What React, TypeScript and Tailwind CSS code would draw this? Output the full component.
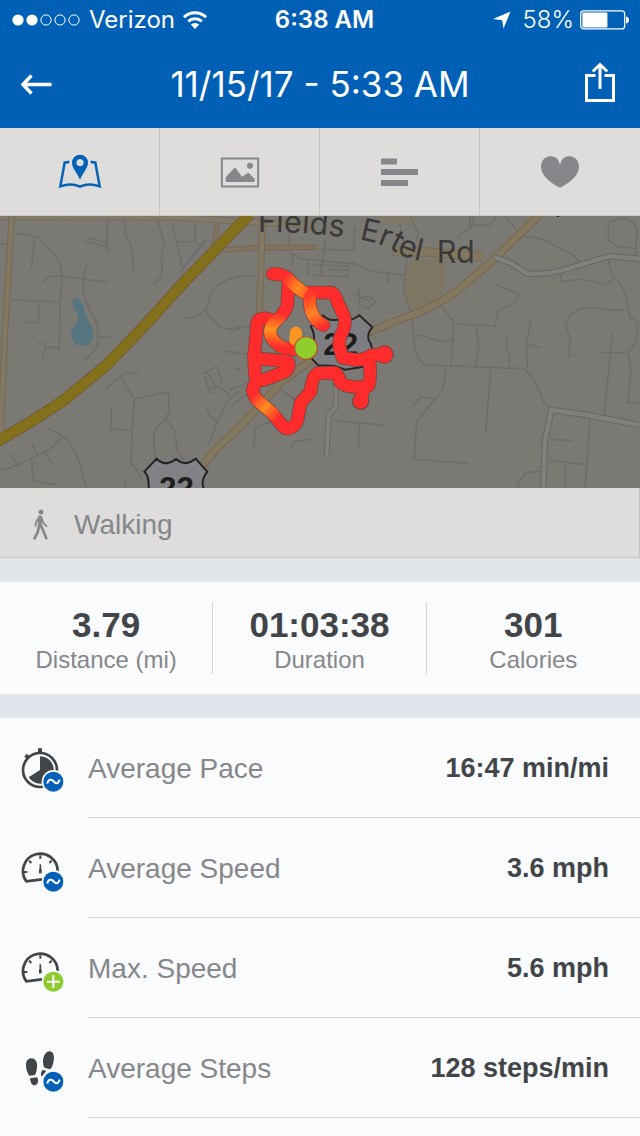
import React from "react";

const WEST_STREETS = [
  "M45 70 Q90 72 120 85 L175 150 Q186 170 186 210 L180 280 L178 422",
  "M105 82 L93 175",
  "M0 102 L20 102",
  "M22 268 L180 276",
  "M118 276 L114 336 L75 337",
  "M112 400 L130 402 L137 412 L178 412 M137 412 L127 442",
  "M130 215 Q145 195 175 198 L250 207 L322 217",
  "M265 158 Q250 180 250 210 L250 250 Q260 285 290 340 Q296 370 291 410 Q280 430 250 453",
  "M295 381 L333 383",
  "M322 30 L322 128 M262 82 L318 97 M256 94 L318 110",
  "M375 30 L376 75 Q395 100 398 130 L402 192",
  "M475 35 L493 105 Q480 125 487 190 Q480 210 461 223",
  "M515 38 L547 170 M532 95 L585 95 L600 105 M585 40 L585 95",
  "M720 198 Q650 215 635 250 L615 300 Q590 325 552 325",
  "M615 300 Q640 335 670 357 Q700 360 720 350",
  "M675 425 L720 428 M705 475 L720 478",
  "M605 493 L650 470 L667 520 M622 485 L645 530 M615 500 L628 545 L640 550 M628 540 L655 527 L688 555",
  "M720 545 Q690 560 680 580 L650 640 L625 705 M620 595 Q630 625 650 632",
  "M316 537 L378 488 L418 491 M362 500 L403 568 L505 545 L507 605 L497 628 Q470 650 463 665 Q460 710 466 745",
  "M497 628 L523 660 Q530 710 533 725 L555 755",
  "M403 568 L397 660 L393 755 L425 805 M334 595 L333 657 L395 660",
  "M145 657 L188 677 Q215 700 240 760 Q248 800 260 833",
  "M188 677 Q165 710 140 722 L60 762 L20 778 L0 778 M95 698 L112 733 M30 730 L52 763 M130 722 L158 762",
  "M95 745 L98 808 L125 818 L168 824 M376 812 L374 833",
];

const CENTER_STREETS = [
  "M110 118 L180 120 L205 145 L290 155 L370 160 L430 185 L525 195",
  "M178 30 L174 122 M286 90 L272 195 M270 118 L370 120 L375 50",
  "M188 128 L188 165 M232 150 L234 195 M240 165 L355 168 L352 200 L248 196 M295 178 L352 180 M476 192 L472 220",
  "M370 250 L420 275 M386 235 L390 295 M390 265 L418 258 L440 276 L412 295 L400 285",
  "M0 205 Q30 195 75 198 M0 370 Q30 350 60 348 M20 430 L60 432 M0 540 L60 515 M0 590 L60 545",
  "M180 560 L198 570 M310 632 L460 645 M388 642 L385 720",
  "M70 720 L75 655 Q100 640 130 635 M180 720 L190 695 L242 688 M150 540 L190 565",
];

const EAST_STREETS = [
  "M172 85 Q175 70 210 55 L210 20 M218 45 L265 47 L290 20 M210 50 L220 45 L218 20",
  "M315 20 L350 60 L375 80 Q430 80 470 110 L520 135 L540 158",
  "M625 38 Q650 25 680 25 Q710 35 712 70 L705 115 L650 110 L625 90 L625 38 M708 90 L708 138",
  "M480 192 L485 215 L545 207 L610 223 L645 205 M625 150 L635 190 Q665 225 675 250 L690 320 L715 340 Q710 410 685 427 L692 480 L684 577 L715 580",
  "M282 223 L358 252 Q350 280 335 285 L295 300 L285 348 L165 342 M120 282 L160 335 L160 380 L152 468",
  "M680 298 Q660 305 600 296 L560 292 Q515 300 500 335 L498 350 L510 385 L508 430 L502 455 M508 435 L535 438",
  "M605 428 L685 427 M637 370 L613 615",
  "M0 42 L20 150 L10 240 L35 320 L42 380 Q45 460 80 465 L375 476 L408 520 L432 580 L450 595",
  "M42 380 Q75 370 95 388 Q130 398 160 390 M228 348 L236 405 L228 470 M320 385 L320 420 Q332 435 328 470 M392 330 L380 400 L382 474 M385 403 L418 413",
  "M137 473 Q135 530 120 550 L50 635 L42 748 L203 760 M38 588 L63 560 L100 567 M272 477 L257 672",
  "M450 688 L515 692 M570 628 L556 833 M447 752 L560 764 M497 764 L495 833 M350 833 L375 788 L425 785",
  "M30 20 L55 70 L48 95 M0 195 L15 195",
];

const ROUTE = [
  "M128 192 Q158 192 172 204 Q195 230 220 247 L305 248 Q318 255 322 275 L343 320 Q348 345 338 365 Q325 385 328 410 L338 443 L380 450 Q400 450 425 436 L468 433",
  "M240 250 Q236 295 250 317 Q262 338 280 345",
  "M175 225 L172 285 Q165 310 135 335 Q115 355 122 378 Q135 402 158 412 L190 419",
  "M132 336 Q110 320 93 327 Q78 330 80 360 L72 440 L75 495 Q80 512 100 510 L160 487 Q178 480 176 460 Q172 450 150 452 L90 446",
  "M80 508 L68 540 Q70 560 90 578 L125 607 L160 650 Q173 662 190 648 Q203 640 206 610 L212 578 L242 545 Q246 500 262 490 L315 488 Q325 494 330 515 Q342 530 385 532 L415 528 Q424 510 418 450",
  "M402 530 L392 574",
];

function StreetGroup({ x, paths }: { x: number; paths: string[] }) {
  return (
    <g transform={`translate(${x} -6) scale(0.33333)`} fill="none" stroke="#6f6e6b" strokeWidth="5">
      {paths.map((d) => (
        <path key={d} d={d} />
      ))}
    </g>
  );
}

function CasedRoad({ d, width, edge, fill }: { d: string; width: number; edge: string; fill: string }) {
  return (
    <g fill="none">
      <path d={d} stroke={edge} strokeWidth={width} />
      <path d={d} stroke={fill} strokeWidth={width - 6} />
    </g>
  );
}

function RouteMap() {
  return (
    <svg
      viewBox="0 0 640 272"
      preserveAspectRatio="xMidYMid slice"
      className="block h-[272px] w-full bg-[#7b7974]"
      role="img"
      aria-label="Route map"
    >
      <defs>
        <linearGradient id="heatA" gradientUnits="userSpaceOnUse" x1="165" y1="195" x2="245" y2="250">
          <stop offset="0" stopColor="#ff2c2b" />
          <stop offset=".55" stopColor="#ff8a22" />
          <stop offset="1" stopColor="#ff5526" />
        </linearGradient>
        <linearGradient id="heatB" gradientUnits="userSpaceOnUse" x1="240" y1="255" x2="285" y2="350">
          <stop offset="0" stopColor="#ff3a29" />
          <stop offset=".5" stopColor="#ff8522" />
          <stop offset="1" stopColor="#ff2c2b" />
        </linearGradient>
        <linearGradient id="heatC" gradientUnits="userSpaceOnUse" x1="155" y1="310" x2="145" y2="412">
          <stop offset="0" stopColor="#ff2c2b" />
          <stop offset=".5" stopColor="#ff9420" />
          <stop offset="1" stopColor="#ff2c2b" />
        </linearGradient>
        <linearGradient id="heatD" gradientUnits="userSpaceOnUse" x1="70" y1="555" x2="145" y2="625">
          <stop offset="0" stopColor="#ff2c2b" />
          <stop offset=".5" stopColor="#ff8d20" />
          <stop offset="1" stopColor="#ff2c2b" />
        </linearGradient>
        <path id="roadNameWest" d="M84 66 Q230 64 380 88" />
        <path id="roadNameMid" d="M387 88 Q450 98 500 128 Q540 152 620 160" />
      </defs>

      <g transform="translate(400 -6) scale(0.33333)">
        <path d="M30 150 L135 145 L135 225 L100 280 L30 300 Q-5 240 30 150Z" fill="#7e7663" />
        <path d="M-60 18 H50 V35 L0 42 L-60 35Z" fill="#7f7865" />
      </g>

      <StreetGroup x={0} paths={WEST_STREETS} />
      <StreetGroup x={230} paths={CENTER_STREETS} />
      <StreetGroup x={400} paths={EAST_STREETS} />

      <g transform="translate(0 -6) scale(0.33333)">
        <path d="M540 187 L618 88" stroke="#696d70" strokeWidth="6" />
        <path
          d="M217 278 Q219 266 231 266 Q242 266 245 280 L264 330 Q280 355 280 370 Q278 406 247 408 Q216 406 213 374 Q215 355 232 338 Q238 330 234 315 L222 293Z"
          fill="#557680"
        />
        <CasedRoad d="M0 20 L560 23 L720 34 L950 47" width={20} edge="#776c5d" fill="#827b68" />
        <CasedRoad d="M35 18 L15 370 L2 665" width={19} edge="#7a6853" fill="#817963" />
        <CasedRoad d="M652 40 L643 100 M675 120 L780 112 L950 112" width={16} edge="#7d6553" fill="#80745f" />
        <CasedRoad d="M787 25 L783 190 L776 340" width={20} edge="#7a6853" fill="#817963" />
        <CasedRoad
          d="M600 775 L650 715 L720 650 L850 510 L950 440 L1060 385 L1200 328 Q1330 285 1410 210 L1480 150 L1620 12"
          width={25}
          edge="#786650"
          fill="#82785f"
        />
        <CasedRoad d="M1180 125 L1280 126 L1450 140" width={28} edge="#7b6a52" fill="#82785f" />
        <path d="M-10 695 L90 637 L190 572 L320 465 L440 340 L560 208 L750 12" fill="none" stroke="#755f34" strokeWidth="35" />
        <path d="M-10 695 L90 637 L190 572 L320 465 L440 340 L560 208 L750 12" fill="none" stroke="#84701b" strokeWidth="28" />
      </g>
      <g transform="translate(400 -6) scale(0.33333)">
        <CasedRoad
          d="M285 142 L335 160 L380 190 Q430 195 480 183 L630 138 L720 147"
          width={19}
          edge="#676664"
          fill="#82807d"
        />
        <CasedRoad d="M430 840 L435 690 L454 600 L560 615 L720 645" width={19} edge="#676664" fill="#82807d" />
      </g>

      <g transform="translate(0 -6) scale(0.33333)">
        <path
          d="M433 785 L470 746 Q485 760 500 760 Q515 758 528 747 Q540 758 555 760 Q572 758 587 746 L622 785 Q606 805 608 825 L625 880 L435 880 Q450 840 445 812 Q445 798 433 785Z"
          fill="#828286"
          stroke="#222"
          strokeWidth="6"
        />
        <text x="477" y="866" fontSize="94" fontWeight="700" fill="#1d1d1d" fontFamily="Liberation Sans, sans-serif">
          22
        </text>
      </g>

      <g transform="translate(230 -6) scale(0.33333)">
        <CasedRoad d="M318 520 L318 590 L296 615 L290 740" width={17} edge="#6a6967" fill="#82807d" />
        <path
          d="M242 350 L280 317 Q295 332 312 330 Q335 328 350 332 Q370 330 388 316 L427 352 Q410 370 416 390 Q430 410 425 440 Q420 460 400 470 L345 479 L315 468 L265 466 L240 440 L252 395 Q255 370 242 350Z"
          fill="#7e7e82"
          stroke="#262626"
          strokeWidth="6"
        />
        <text x="280" y="435" fontSize="94" fontWeight="700" fill="#1d1d1d" fontFamily="Liberation Sans, sans-serif">
          22
        </text>
        <g fill="#393939" fontSize="92" fontFamily="Inter, sans-serif">
          <text>
            <textPath href="#roadNameWest">Fields</textPath>
          </text>
          <text>
            <textPath href="#roadNameMid">Ertel</textPath>
          </text>
          <text x="620" y="160">
            Rd
          </text>
        </g>

        <g fill="none" strokeLinecap="round" strokeLinejoin="round">
          <g stroke="#7b443e" strokeWidth="41">
            {ROUTE.map((d) => (
              <path key={d} d={d} />
            ))}
          </g>
          <circle cx="463" cy="434" r="28" fill="#7b443e" />
          <circle cx="392" cy="574" r="26" fill="#7b443e" />
          <g stroke="#ff2c2b" strokeWidth="36">
            {ROUTE.map((d) => (
              <path key={d} d={d} />
            ))}
          </g>
          <circle cx="463" cy="434" r="25" fill="#ff2c2b" />
          <circle cx="392" cy="574" r="22" fill="#ff2c2b" />
          <path d="M172 204 Q195 230 220 247" stroke="url(#heatA)" strokeWidth="36" />
          <path d="M240 258 Q236 295 250 317 Q262 338 280 345" stroke="url(#heatB)" strokeWidth="36" />
          <path d="M150 322 L135 335 Q115 355 122 378 Q135 402 158 412" stroke="url(#heatC)" strokeWidth="36" />
          <path d="M80 568 L90 578 L125 607 L135 618" stroke="url(#heatD)" strokeWidth="36" />
          <path d="M198 368 L196 390" stroke="#ff9420" strokeWidth="36" />
        </g>
        <circle cx="228" cy="415" r="36" fill="#b5572c" />
        <circle cx="228" cy="414" r="32" fill="#8fce2b" />
      </g>
      <circle cx="558" cy="-1" r="2" fill="#222" />
    </svg>
  );
}

function StatusBar() {
  return (
    <div className="grid h-10 grid-cols-[1fr_auto_1fr] items-center pr-[11px] pl-3 text-2xl">
      <div className="flex items-center gap-2">
        <svg className="h-3 w-[69px]" viewBox="0 0 69 12" aria-label="Signal strength">
          {[6, 20, 34, 48, 62].map((cx, i) => (
            <circle key={cx} cx={cx} cy="6" r={i < 2 ? 5.6 : 5.1} fill={i < 2 ? "#fff" : "none"} stroke="#fff" strokeWidth={i < 2 ? 0 : 1} />
          ))}
        </svg>
        <span>Verizon</span>
        <svg className="h-5 w-6" viewBox="0 0 24 20" fill="none" stroke="#fff" strokeWidth="3" aria-label="Wi-Fi">
          <path d="M1 7.2 A15.8 15.8 0 0 1 23 7.2" />
          <path d="M5.2 11.3 A10 10 0 0 1 18.8 11.3" />
          <path d="M12 19 L7.8 14.6 A6 6 0 0 1 16.2 14.6Z" fill="#fff" stroke="none" />
        </svg>
      </div>
      <span className="pl-2 font-semibold">6:38 AM</span>
      <div className="flex items-center justify-end gap-1.5">
        <svg className="mr-1.5 h-[18px] w-[18px]" viewBox="0 0 18 18" aria-label="Location in use">
          <path d="M17.5 0.5 L10.5 17.5 L9.2 9.2 L0 8Z" fill="#fff" />
        </svg>
        <span className="font-light">58%</span>
        <svg className="h-5 w-[49px]" viewBox="0 0 49 20" aria-label="Battery">
          <rect x="0.7" y="0.9" width="44" height="18" rx="3" fill="none" stroke="#fff" strokeWidth="1.2" />
          <rect x="2.4" y="2.6" width="25" height="14.8" rx="1" fill="#fff" />
          <path d="M46 6.5 Q49 7 49 10 Q49 13 46 13.5Z" fill="#fff" />
        </svg>
      </div>
    </div>
  );
}

function TitleBar() {
  return (
    <div className="flex h-[88px] items-center justify-between px-5">
      <button type="button" aria-label="Back" className="flex w-10 justify-start">
        <svg className="h-6 w-8" viewBox="0 0 32 24" fill="none" stroke="#fff" strokeWidth="3.4">
          <path d="M2.5 12.5 H31.5 M11.5 3.5 L3 12.5 L11.5 21.5" />
        </svg>
      </button>
      <h1 className="text-[35px] leading-10 font-normal">11/15/17 - 5:33 AM</h1>
      <button type="button" aria-label="Share" className="flex w-10 justify-center">
        <svg className="h-11 w-8" viewBox="0 0 32 44" fill="none" stroke="#fff" strokeWidth="3">
          <path d="M11.5 13.5 H2.5 V38.5 H29.5 V13.5 H20.5 M16 27 V2.5 M8.7 9.5 L16 2.5 L23.3 9.5" />
        </svg>
      </button>
    </div>
  );
}

function MapTabIcon() {
  return (
    <svg className="h-9 w-11" viewBox="0 0 132 108">
      <path
        d="M34 23 L20 26 L7 97 Q40 86 66 98 Q92 86 125 97 L112 26 L98 23"
        fill="none"
        stroke="#0361b6"
        strokeWidth="7.5"
      />
      <path
        fillRule="evenodd"
        d="M66 78 C60 58 42 44 42 26 A24 24 0 0 1 90 26 C90 44 72 58 66 78Z M66 15 A11 11 0 1 0 66.1 15Z"
        fill="#0361b6"
      />
    </svg>
  );
}

function PhotoTabIcon() {
  return (
    <svg className="h-8 w-10" viewBox="0 0 120 96">
      <rect x="5.5" y="7.5" width="109" height="84" fill="none" stroke="#85878a" strokeWidth="6" />
      <path d="M17 78 V64 L45 34 L66 62 L85 50 L104 68 V78Z" fill="#85878a" />
      <circle cx="90" cy="29" r="9" fill="#85878a" />
    </svg>
  );
}

function SplitsTabIcon() {
  return (
    <svg className="h-7 w-10" viewBox="0 0 40 28" fill="#85878a">
      <path d="M1 0.5 H17 V6.5 H1Z M1 11 H38 V17 H1Z M1 22 H28 V28 H1Z" />
    </svg>
  );
}

function HeartTabIcon() {
  return (
    <svg className="h-8 w-10" viewBox="0 0 120 96">
      <path
        d="M60 95 C35 83 3 60 3 32 C3 14 15 1 32 1 C46 1 57 10 60 28 C63 10 74 1 88 1 C105 1 117 14 117 32 C117 60 85 83 60 95Z"
        fill="#85878a"
      />
    </svg>
  );
}

const TABS = [
  { label: "Map", Icon: MapTabIcon },
  { label: "Photos", Icon: PhotoTabIcon },
  { label: "Splits", Icon: SplitsTabIcon },
  { label: "Heart rate", Icon: HeartTabIcon },
];

function Badge({ kind }: { kind: "average" | "max" }) {
  return (
    <>
      <circle cx="160" cy="139" r="35" fill="#f9fbfd" />
      <circle cx="160" cy="139" r="30" fill={kind === "average" ? "#0461b7" : "#8ccb2b"} />
      {kind === "average" ? (
        <path d="M142 145 Q144 132 153 133 Q158 134 163 140 Q173 150 179 133" fill="none" stroke="#fff" strokeWidth="6" />
      ) : (
        <path d="M141 139 H179 M160 120 V158" stroke="#fff" strokeWidth="6" />
      )}
    </>
  );
}

function PaceGlyph() {
  return (
    <>
      <circle cx="120" cy="104" r="51" fill="none" stroke="#424547" strokeWidth="8" />
      <path d="M114 39 H126 V54 H114Z M73 64 L80 55 L90 64 L82 72Z" fill="#424547" />
      <path d="M120 104 V63 A41 41 0 1 1 86 126Z" fill="#424547" />
    </>
  );
}

function GaugeGlyph() {
  return (
    <g fill="none" stroke="#424547">
      <path d="M126 132 L79 138 A52 52 0 1 1 173 108" strokeWidth="8" />
      <path d="M121 60 V70 M87 76 L94 83 M155 76 L148 83 M72 110 H82 M170 110 H160" strokeWidth="6" />
      <path d="M121 87 V110" strokeWidth="5" />
      <path d="M121 102 V114" strokeWidth="8" />
    </g>
  );
}

function StepsGlyph() {
  return (
    <g fill="#424547">
      <path d="M93 69 C107 68 113 82 111 98 C109 108 108 113 105 119 L88 121 C81 111 78 100 78 88 C78 77 84 70 93 69Z" />
      <path d="M90 129 L112 126 C117 138 113 150 105 150 C96 151 91 142 90 129Z" />
      <path d="M149 48 C160 49 164 62 161 76 C159 90 154 99 150 102 L133 97 C128 86 127 71 133 60 C137 52 143 48 149 48Z" />
      <path d="M128 103 L139 107 L125 124 C121 116 123 108 128 103Z" />
    </g>
  );
}

const STATS = [
  { value: "3.79", label: "Distance (mi)" },
  { value: "01:03:38", label: "Duration" },
  { value: "301", label: "Calories" },
];

const DETAILS = [
  { label: "Average Pace", value: "16:47 min/mi", Glyph: PaceGlyph, badge: "average" as const },
  { label: "Average Speed", value: "3.6 mph", Glyph: GaugeGlyph, badge: "average" as const },
  { label: "Max. Speed", value: "5.6 mph", Glyph: GaugeGlyph, badge: "max" as const },
  { label: "Average Steps", value: "128 steps/min", Glyph: StepsGlyph, badge: "average" as const },
];

export default function App() {
  return (
    <div className="flex min-h-screen flex-col bg-[#f9fbfd] font-['Liberation_Sans',Arial,sans-serif]">
      <header className="bg-[#0060b6] font-['Inter',sans-serif] text-white">
        <StatusBar />
        <TitleBar />
      </header>

      <nav className="grid h-[88px] grid-cols-4 divide-x divide-[#c3c3c2] border-b border-[#c9c8c6] bg-[#dedddb]">
        {TABS.map(({ label, Icon }) => (
          <button key={label} type="button" aria-label={label} className="flex items-center justify-center">
            <Icon />
          </button>
        ))}
      </nav>

      <RouteMap />

      <div className="flex h-[70px] items-center gap-6 border-r border-b border-[#c5c5c4] bg-[#dedddc] px-[30px] pt-1 text-[28px] text-[#85878a]">
        <svg className="h-8 w-5" viewBox="0 0 60 96" fill="none" stroke="#85878a" aria-hidden="true">
          <circle cx="33" cy="9" r="7.5" fill="#85878a" stroke="none" />
          <path d="M31 20 L29 50" strokeWidth="12" />
          <path d="M28 25 L19 37 L16 53 M35 27 L40 42 L51 53" strokeWidth="5.5" />
          <path d="M28 48 L23 70 L12 91 M32 48 L40 66 L50 91" strokeWidth="8" />
        </svg>
        <span>Walking</span>
      </div>

      <dl className="grid grid-cols-3 divide-x divide-[#d3d6d9] border-y-24 border-[#e1e5e9] py-5 text-center">
        {STATS.map(({ value, label }) => (
          <div key={label} className="flex h-[72px] flex-col-reverse justify-center pt-1">
            <dt className="text-2xl leading-[30px] text-[#85878a]">{label}</dt>
            <dd className="text-[35px] leading-10 font-bold text-[#424547]">{value}</dd>
          </div>
        ))}
      </dl>

      <dl>
        {DETAILS.map(({ label, value, Glyph, badge }) => (
          <div key={label} className="flex h-[100px] pl-[21px]">
            <div className="flex w-[67px] items-center">
              <svg className="h-12 w-11" viewBox="63 26 132 144" aria-hidden="true">
                <Glyph />
                <Badge kind={badge} />
              </svg>
            </div>
            <div className="flex flex-1 items-center justify-between border-b border-[#d3d6d9] pt-0.5 pr-[31px]">
              <dt className="text-[28px] text-[#85878a]">{label}</dt>
              <dd className="text-[27px] font-bold text-[#424547]">{value}</dd>
            </div>
          </div>
        ))}
      </dl>
    </div>
  );
}
